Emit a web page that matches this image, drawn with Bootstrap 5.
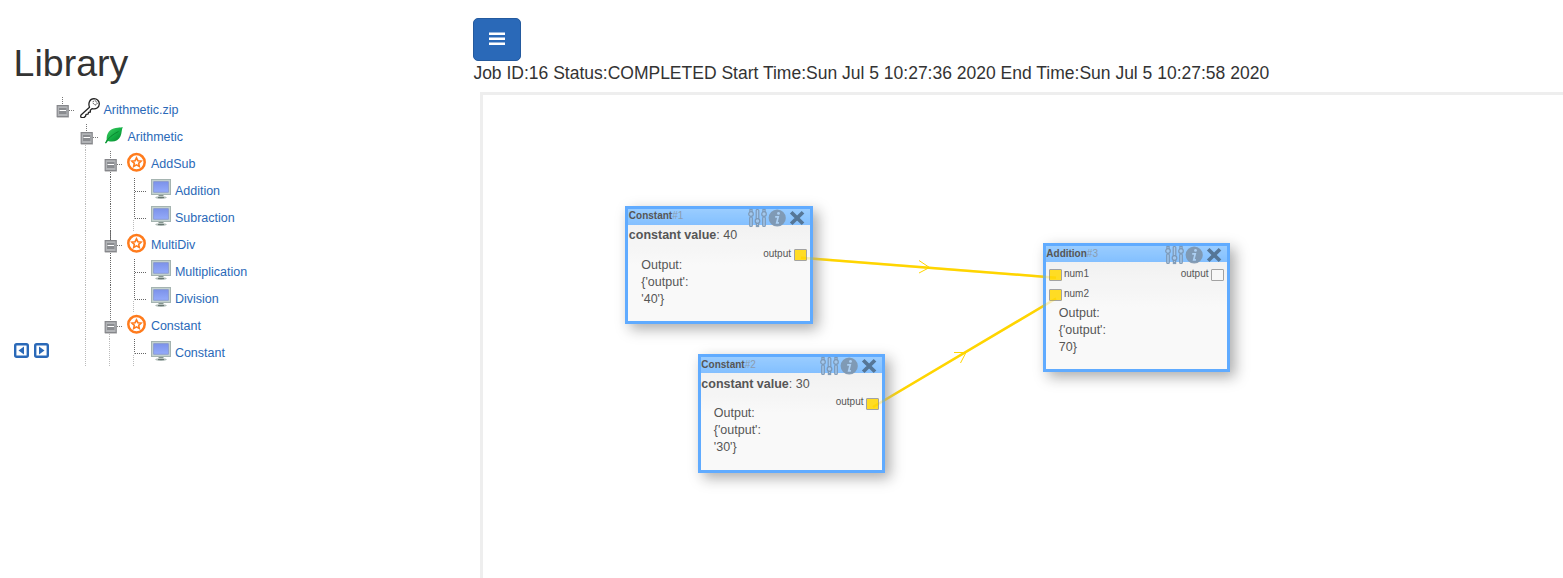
<!DOCTYPE html>
<html lang="en">
<head>
<meta charset="utf-8">
<title>Library</title>
<link href="https://cdn.jsdelivr.net/npm/bootstrap@5.3.0/dist/css/bootstrap.min.css" rel="stylesheet">
<style>
body{font-family:"Liberation Sans",Arial,sans-serif;font-size:12.5px;color:#333;line-height:17px}
.side{width:473px;padding:42px 0 0 14px}
.side h1{font-size:37.5px;line-height:42px;font-weight:400;margin:0 0 12px -.4px}
.pager{width:36px;padding-bottom:8px;gap:5px}
.tree-row{height:27px}
.tree-row a{color:#2a69b8;text-decoration:none;margin-left:3.5px;padding-top:2px}
.tree-row .ico{margin-left:6px;margin-top:-3px}
.tree-row .ico.deep{margin-left:5.4px}
.tree-row svg{flex:none;display:block}
.menu-btn{width:48px;height:43px;margin-top:18px;padding:0 0 2px;background:#2a69b8;border:1px solid #245a9e;border-radius:5px}
.job{font-size:17.5px;line-height:23px;white-space:nowrap;padding:1px 0 0 .4px}
.board{margin:7px 0 0 7px;border:3px solid #eee;border-right:0;border-bottom:0}
.wires{left:0;top:0}
.over{opacity:.2}
.node{border:3px solid #4fa3ff;width:187.5px;background:linear-gradient(#ededed,#f9f9f9 50%);box-shadow:5px 5px 13px #a4a4a4;opacity:.9;color:#444}
.node-head{height:16px;font-size:10px;line-height:13px;background:linear-gradient(#8fc8ff,#76b9ff);padding-left:.8px}
.node-head span{color:#7e91a8}
.tools{right:3.7px;top:-1px;opacity:.9}
.port{font-size:10px;line-height:13px;height:20px}
.sock{width:13px;height:12px;border:1px solid #999;border-radius:1px;background:#f8f8f8;margin-top:2px}
.sock.on{background:#ffd90d}
.result{padding-left:13.3px;width:75px}
</style>
</head>
<body class="bg-white overflow-hidden">
<svg width="0" height="0" class="position-absolute"><defs>
<linearGradient id="gl" x1="0" y1="0" x2="1" y2="1"><stop offset="0" stop-color="#4fd46a"/><stop offset=".5" stop-color="#14b045"/><stop offset="1" stop-color="#067a25"/></linearGradient>
<linearGradient id="gm" x1="0" y1="0" x2="0" y2="1"><stop offset="0" stop-color="#7c92ea"/><stop offset="1" stop-color="#94abfa"/></linearGradient>
<symbol id="box" viewBox="0 0 24 27"><path d="M12.500 1v8M19 14.500h6" stroke="#777" stroke-dasharray="1 1"/><rect x="7" y="20.500" width="12" height="1.500" fill="#ddd"/><rect x="7.200" y="9.600" width="11" height="11" fill="#b2b4b7" stroke="#86878b" stroke-width="1.200"/><path d="M9 12h7.500v6H9z" fill="#8a8c90"/><path d="M9.500 14.500h6.500" stroke="#fff"/></symbol>
<symbol id="light" viewBox="0 0 24 27"><path d="M11.500 0v27" stroke="#bbb" stroke-dasharray="1 1"/></symbol>
<symbol id="dark" viewBox="0 0 24 27"><path d="M12.500 0v27" stroke="#666" stroke-dasharray="1 1"/></symbol>
<symbol id="tee" viewBox="0 0 24 27"><path d="M12.500 1v26M13 14.500h12" stroke="#666" stroke-dasharray="1 1"/></symbol>
<symbol id="elbow" viewBox="0 0 24 27"><path d="M12.500 0v14.500M13 14.500h12" stroke="#666" stroke-dasharray="1 1"/><path d="M11.500 16v12" stroke="#bbb" stroke-dasharray="1 1"/></symbol>
<symbol id="last" viewBox="0 0 24 27"><path d="M11.500 22v5" stroke="#bbb" stroke-dasharray="1 1"/></symbol>
<symbol id="cont" viewBox="0 0 24 27"><path d="M12.500 22v5" stroke="#666" stroke-dasharray="1 1"/></symbol>
<symbol id="key" viewBox="0 0 20 20"><path d="M9.500 9.300C8 5.200 9.500.8 14 .7c3 0 5.400 2.500 5.300 5.200-.2 3.700-3.300 5.800-7.300 4.700l-1.700 1.700.1 1.700-1.900.3-.4 1.900-2 .1-.6 1.900-1.500 1.400H1.500c-1-.5-.9-2-.5-2.600z" fill="#fff" stroke="#222" stroke-width="1.300" stroke-linejoin="round"/><rect x="12.700" y="3.200" width="4.400" height="3.300" rx="1.500" transform="rotate(43 15 5)" fill="none" stroke="#222" stroke-width=".8" stroke-dasharray="1.500 .7"/></symbol>
<symbol id="leaf" viewBox="0 0 20 20"><path transform="translate(-.5 1)" d="M19.300 1C18 2 11 .5 6.500 4.500 2.800 8 3.200 12 3.200 13.500L1.500 17l1 .6 2-2.600c6 1.700 10.500-.5 12.500-4.800C18.500 7 18 3.300 19.300 1z" fill="url(#gl)"/><path d="M1.500 18C4.500 12.500 8.500 9.500 14.500 6.500" stroke="#087b2a" stroke-width=".8" fill="none"/></symbol>
<symbol id="star" viewBox="0 0 20 20"><circle cx="9.500" cy="10.300" r="8.200" fill="#fff" stroke="#ff7b1c" stroke-width="2.500"/><path d="M9.500 5.800l1.400 2.900 3.200.4-2.400 2.200.6 3.200-2.800-1.600-2.800 1.600.6-3.200-2.400-2.200 3.200-.4z" fill="#fff" stroke="#ff7b1c" stroke-width="1.600"/></symbol>
<symbol id="pc" viewBox="0 0 20 20"><path d="M7.500 14.500h5v3h-5z" fill="#85958f"/><ellipse cx="10" cy="18.600" rx="5.800" ry="1.400" fill="#b3bfbb"/><path d="M7 18.600h6" stroke="#62706a"/><rect x=".5" y=".5" width="19" height="15" fill="#c4d2cf" stroke="#a5b4b1"/><rect x="2.700" y="2.700" width="14.600" height="10.500" fill="url(#gm)" stroke="#7f8ecb" stroke-width=".7"/></symbol>
<symbol id="toolset" viewBox="0 0 58 20"><g fill="#9cc3ea" stroke="#6e8aa8" stroke-width="1.200"><rect x="1.700" y="9" width="2.600" height="9.500" rx="1"/><rect x="1.900" y="1.500" width="2.200" height="3"/><circle cx="3" cy="6" r="2.300"/><rect x="8.200" y="1.500" width="2.600" height="9.500" rx="1"/><rect x="8.400" y="15" width="2.200" height="3.500"/><circle cx="9.500" cy="13" r="2.300"/><rect x="14.700" y="9" width="2.600" height="9.500" rx="1"/><rect x="14.900" y="1.500" width="2.200" height="3"/><circle cx="16" cy="6" r="2.300"/></g><circle cx="29.200" cy="10" r="8.600" fill="#718ba5"/><circle cx="30.500" cy="5.400" r="1.400" fill="#a8cdf2"/><path d="M27.200 8.900h3l-1.500 6h2.200" fill="none" stroke="#a8cdf2" stroke-width="1.700"/><path d="M43.200 4.200l11.800 11.600M55 4.200L43.200 15.800" stroke="#3d5f80" stroke-width="3.700"/></symbol>
</defs></svg>
<div class="d-flex vh-100">
  <aside class="side flex-shrink-0">
    <h1>Library</h1>
    <div class="d-flex align-items-end">
      <div class="pager d-flex">
        <svg width="15" height="15"><rect x="1.200" y="1.200" width="12.600" height="12.600" rx="1.500" fill="#fff" stroke="#2a69b8" stroke-width="2.400"/><path d="M10 3.500v8L4.500 7.500z" fill="#2a69b8"/></svg>
        <svg width="15" height="15"><rect x="1.200" y="1.200" width="12.600" height="12.600" rx="1.500" fill="#fff" stroke="#2a69b8" stroke-width="2.400"/><path d="M5 3.500v8l5.500-4z" fill="#2a69b8"/></svg>
      </div>
      <div id="tree"></div>
    </div>
  </aside>
  <main class="flex-grow-1 d-flex flex-column" style="min-width:0">
    <button class="menu-btn d-flex align-items-center justify-content-center" aria-label="Menu"><svg width="16" height="14"><path d="M0 1.800h16M0 6.800h16M0 11.800h16" stroke="#fff" stroke-width="2.400"/></svg></button>
    <div class="job">Job ID:16 Status:COMPLETED Start Time:Sun Jul 5 10:27:36 2020 End Time:Sun Jul 5 10:27:58 2020</div>
    <div class="board position-relative flex-grow-1">
      <svg class="wires position-absolute" width="1080" height="480" viewBox="483 95 1080 480" fill="none" stroke="#ffd500"><path id="links" d="M801 257.800L1056 277.700M873 407L1056 298.500" stroke-width="2.500"/><path d="M919 260.500l10.500 7-10.500 5.500M954 352.500h12l-5.500 10.500" stroke-width="1"/></svg>
      <div class="node position-absolute" style="left:142px;top:111px;height:118px">
        <div class="node-head"><b>Constant</b><span>#1</span></div>
        <svg class="tools position-absolute" width="58" height="20"><use href="#toolset"/></svg>
        <div style="padding:2px 0 0 .8px;height:22px"><b>constant value</b>: 40</div>
        <div class="port d-flex justify-content-end" style="padding-right:3px;gap:2.500px"><span>output</span><i class="sock on"></i></div>
        <div class="result" style="margin-top:-10px">Output: {'output': '40'}</div>
      </div>
      <div class="node position-absolute" style="left:214.500px;top:259px;height:119px">
        <div class="node-head" style="padding-top:1px"><b>Constant</b><span>#2</span></div>
        <svg class="tools position-absolute" width="58" height="20"><use href="#toolset"/></svg>
        <div style="padding:3px 0 0 .8px;height:22px"><b>constant value</b>: 30</div>
        <div class="port d-flex justify-content-end" style="padding-right:3px;gap:2.500px"><span>output</span><i class="sock on" style="margin-top:3px"></i></div>
        <div class="result" style="margin-top:-10px">Output: {'output': '30'}</div>
      </div>
      <div class="node position-absolute" style="left:559.500px;top:148px;height:129px">
        <div class="node-head" style="padding-top:1px"><b>Addition</b><span>#3</span></div>
        <svg class="tools position-absolute" width="58" height="20"><use href="#toolset"/></svg>
        <div class="port d-flex" style="padding:5px 3px 0;gap:2.500px;height:25px"><i class="sock on"></i><span>num1</span><span class="ms-auto">output</span><i class="sock"></i></div>
        <div class="port d-flex" style="padding:0 3px;gap:2.500px"><i class="sock on"></i><span>num2</span></div>
        <div class="result" style="margin-top:-2px">Output: {'output': 70}</div>
      </div>
      <svg class="wires over position-absolute pe-none" width="1080" height="480" viewBox="483 95 1080 480" fill="none" stroke="#ffd500"><use href="#links"/></svg>
    </div>
  </main>
</div>
<script>
const rows=[
 ["box","key","Arithmetic.zip"],
 [",box+last","leaf","Arithmetic"],
 [",light,box+cont","star","AddSub"],
 [",light,dark,tee","pc","Addition"],
 [",light,dark,elbow","pc","Subraction"],
 [",light,box+dark","star","MultiDiv"],
 [",light,dark,tee","pc","Multiplication"],
 [",light,dark,elbow","pc","Division"],
 [",light,box+last","star","Constant"],
 [",light,light,elbow","pc","Constant"]];
document.getElementById("tree").innerHTML=rows.map(([cells,icon,label])=>
 '<div class="tree-row d-flex align-items-center">'+cells.split(",").map(c=>
  '<svg width="24" height="27" overflow="visible">'+c.split("+").reverse().filter(Boolean).map(n=>`<use href="#${n}" width="24" height="27"/>`).join("")+'</svg>').join("")+
 `<svg class="ico${cells.split(",").length>2?" deep":""}" width="20" height="20"><use href="#${icon}" width="20" height="20"/></svg><a href="#">${label}</a></div>`).join("");
</script>
<script src="https://cdn.jsdelivr.net/npm/bootstrap@5.3.0/dist/js/bootstrap.bundle.min.js"></script>
</body>
</html>
